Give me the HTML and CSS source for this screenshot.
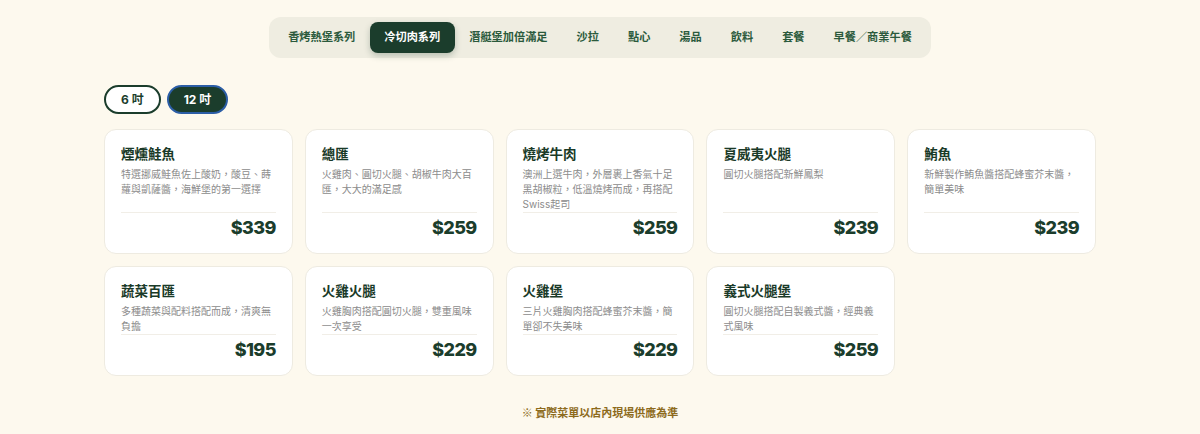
FILE: index.html
```html
<!DOCTYPE html>
<html lang="zh-Hant">
<head>
<meta charset="utf-8">
<link rel="stylesheet" href="styles.css">
</head>
<body>
<div class="page">
  <div class="tabs-wrap">
    <nav class="tabs">
      <span class="tab">香烤熱堡系列</span>
      <span class="tab active">冷切肉系列</span>
      <span class="tab">潛艇堡加倍滿足</span>
      <span class="tab">沙拉</span>
      <span class="tab">點心</span>
      <span class="tab">湯品</span>
      <span class="tab">飲料</span>
      <span class="tab">套餐</span>
      <span class="tab">早餐／商業午餐</span>
    </nav>
  </div>
  <div class="container">
    <div class="sizes">
      <span class="pill">6 吋</span>
      <span class="pill selected">12 吋</span>
    </div>
    <div class="grid">
      <div class="card"><div class="title">煙燻鮭魚</div><div class="desc">特選挪威鮭魚佐上酸奶，酸豆、蒔蘿與凱薩醬，海鮮堡的第一選擇</div><div class="foot"><span class="price">$339</span></div></div>
      <div class="card"><div class="title">總匯</div><div class="desc">火雞肉、圓切火腿、胡椒牛肉大百匯，大大的滿足感</div><div class="foot"><span class="price">$259</span></div></div>
      <div class="card"><div class="title">燒烤牛肉</div><div class="desc">澳洲上選牛肉，外層裹上香氣十足黑胡椒粒，低溫燒烤而成，再搭配Swiss起司</div><div class="foot"><span class="price">$259</span></div></div>
      <div class="card"><div class="title">夏威夷火腿</div><div class="desc">圓切火腿搭配新鮮鳳梨</div><div class="foot"><span class="price">$239</span></div></div>
      <div class="card"><div class="title">鮪魚</div><div class="desc">新鮮製作鮪魚醬搭配蜂蜜芥末醬，簡單美味</div><div class="foot"><span class="price">$239</span></div></div>
      <div class="card"><div class="title">蔬菜百匯</div><div class="desc">多種蔬菜與配料搭配而成，清爽無負擔</div><div class="foot"><span class="price">$195</span></div></div>
      <div class="card"><div class="title">火雞火腿</div><div class="desc">火雞胸肉搭配圓切火腿，雙重風味一次享受</div><div class="foot"><span class="price">$229</span></div></div>
      <div class="card"><div class="title">火雞堡</div><div class="desc">三片火雞胸肉搭配蜂蜜芥末醬，簡單卻不失美味</div><div class="foot"><span class="price">$229</span></div></div>
      <div class="card"><div class="title">義式火腿堡</div><div class="desc">圓切火腿搭配自製義式醬，經典義式風味</div><div class="foot"><span class="price">$259</span></div></div>
    </div>
    <p class="note">※ 實際菜單以店內現場供應為準</p>
  </div>
</div>
</body>
</html>
```

FILE: styles.css
```css
* { box-sizing: border-box; }
html, body { margin: 0; padding: 0; }
body {
  background: #fdf9ee;
  font-family: "Inter", "Noto Sans CJK TC", sans-serif;
  color: #1b3d2c;
}
.page { padding-top: 17px; }
.tabs-wrap { display: flex; justify-content: center; }
.tabs {
  display: flex;
  padding: 5px;
  background: #efede1;
  border-radius: 12px;
}
.tab {
  padding: 7px 14.5px;
  font-size: 11.2px;
  line-height: 17px;
  font-weight: 700;
  color: #2b5a3c;
  border-radius: 8px;
  white-space: nowrap;
}
.tab.active {
  background: #1b3d2c;
  color: #ffffff;
  box-shadow: 0 3px 6px rgba(27, 61, 44, 0.25);
}
.container {
  width: 992px;
  margin: 0 auto;
}
.sizes {
  display: flex;
  gap: 6px;
  margin-top: 27px;
}
.pill {
  height: 29px;
  padding: 0 15px;
  border: 2px solid #1b3d2c;
  border-radius: 999px;
  font-size: 12px;
  font-weight: 700;
  line-height: 25px;
  color: #1b3d2c;
  background: #ffffff;
}
.pill.selected {
  background: #1b3d2c;
  color: #ffffff;
  border-color: #2c5ea6;
}
.grid {
  display: grid;
  grid-template-columns: repeat(5, 1fr);
  gap: 12px;
  margin-top: 15px;
}
.card {
  display: flex;
  flex-direction: column;
  background: #ffffff;
  border: 1px solid #eeebe1;
  border-radius: 12px;
  padding: 13px 16px 12px;
}
.title {
  font-size: 13.5px;
  line-height: 22px;
  font-weight: 700;
  color: #1a3a28;
}
.desc {
  margin-top: 2px;
  font-size: 10px;
  line-height: 15px;
  color: #8c8c8c;
}
.foot {
  margin-top: auto;
  border-top: 1px solid #f1eee7;
  padding-top: 2px;
  text-align: right;
}
.price {
  font-size: 18px;
  line-height: 26px;
  font-weight: 800;
  letter-spacing: -0.6px;
  color: #1b3d2c;
}
.note {
  margin: 28px 0 0;
  text-align: center;
  font-family: "Noto Sans CJK TC", sans-serif;
  font-size: 11px;
  line-height: 16px;
  font-weight: 700;
  color: #8d6b1c;
}
```
